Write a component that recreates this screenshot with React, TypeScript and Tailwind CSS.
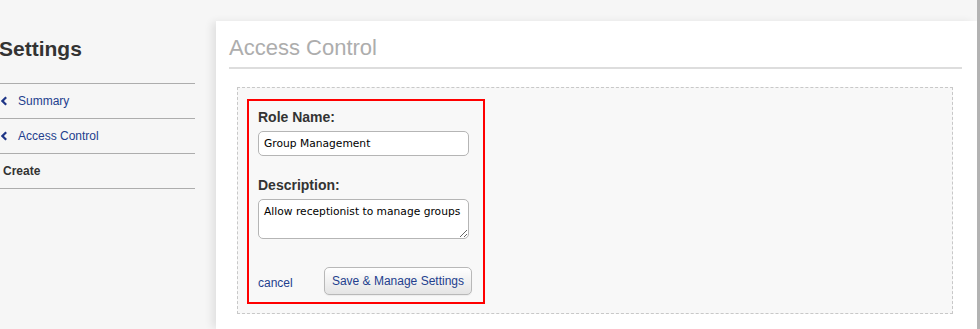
import React from "react";

function Chevron() {
  return (
    <svg width="6" height="10" viewBox="0 0 6 10" className="shrink-0">
      <polyline points="5.2,1.2 1.4,5 5.2,8.8" fill="none" stroke="#1f3687" strokeWidth="2.2" />
    </svg>
  );
}

export default function App() {
  return (
    <div className="w-[980px] h-[329px] bg-[#f6f6f6] flex overflow-hidden font-['Liberation_Sans',Arial,sans-serif]">
      <div className="flex-1 flex flex-col">
        <div className="h-[21px] shrink-0" />
        <div className="flex flex-1">
          <aside className="w-[216px] shrink-0">
            <h1 className="pt-[16px] mb-[22px] ml-[-1px] text-[21px] leading-[24px] font-bold text-[#333]">Settings</h1>
            <ul className="w-[195px] border-b border-[#adadad] text-[12px]">
              <li className="h-[35px] border-t border-[#adadad] flex items-center pl-[1px] text-[#23408e]">
                <Chevron />
                <span className="ml-[11px]">Summary</span>
              </li>
              <li className="h-[35px] border-t border-[#adadad] flex items-center pl-[1px] text-[#23408e]">
                <Chevron />
                <span className="ml-[11px]">Access Control</span>
              </li>
              <li className="h-[35px] border-t border-[#adadad] flex items-center pl-[3px] font-bold text-[#333]">
                Create
              </li>
            </ul>
          </aside>
          <main className="flex-1 bg-white shadow-[-5px_0_8px_-1px_rgba(0,0,0,0.09)] pl-[13px] pr-[15px] flex flex-col">
            <h2 className="pt-[14px] pb-[6px] border-b-2 border-[#dddddd] text-[22px] leading-[26px] text-[#adadad]">
              Access Control
            </h2>
            <div className="mt-[18px] ml-[8px] mr-[9px] h-[227px] border border-dashed border-[#c8c8c8] bg-[#f8f8f8]">
              <div className="mt-[11px] ml-[9px] w-[238px] h-[205px] border-2 border-[#ff0000] pl-[9px] pt-[8px]">
                <label className="block text-[14px] leading-[17px] font-bold text-[#333]">Role Name:</label>
                <input
                  readOnly
                  value="Group Management"
                  className="mt-[5px] block w-[211px] h-[25px] rounded-[5px] border border-[#b5b5b5] bg-white pl-[5px] text-[10.7px] text-black font-['DejaVu_Sans',sans-serif] outline-none"
                />
                <label className="block mt-[21px] text-[14px] leading-[17px] font-bold text-[#333]">Description:</label>
                <textarea
                  readOnly
                  value="Allow receptionist to manage groups"
                  className="mt-[5px] block w-[211px] h-[40px] rounded-[5px] border border-[#b5b5b5] bg-white pl-[5px] pt-[5px] text-[10.7px] leading-[13px] text-black font-['DejaVu_Sans',sans-serif] outline-none resize"
                />
                <div className="mt-[28px] w-[214px] flex items-center">
                  <a className="pt-[4px] text-[12px] leading-[14px] text-[#23408e]">cancel</a>
                  <button className="ml-auto h-[28px] px-[7px] rounded-[5px] border border-[#b8b8b8] bg-gradient-to-b from-[#ffffff] to-[#e4e4e4] text-[12px] text-[#23408e] shadow-[0_1px_1px_rgba(0,0,0,0.05)]">
                    Save &amp; Manage Settings
                  </button>
                </div>
              </div>
            </div>
          </main>
        </div>
      </div>
      <div className="w-[3px] bg-[#b3b3b3] shrink-0" />
    </div>
  );
}
